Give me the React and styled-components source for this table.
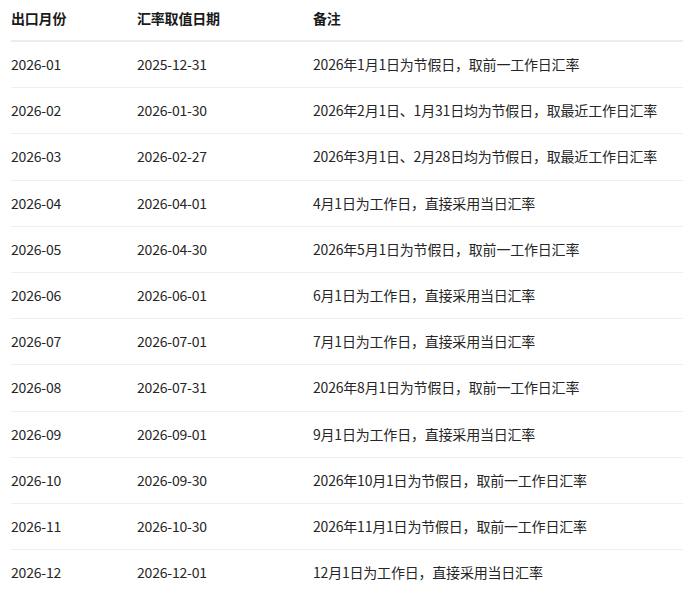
import React from 'react';
import styled, { createGlobalStyle } from 'styled-components';

const GlobalStyle = createGlobalStyle`
  body {
    margin: 0;
    background: #ffffff;
    font-family: "Noto Sans CJK SC", "Noto Sans", sans-serif;
  }
`;

const Wrap = styled.div`
  padding-left: 11px;
  overflow: hidden;
`;

const Table = styled.table`
  width: 700px;
  border-collapse: collapse;
  font-size: 14px;
  letter-spacing: -0.2px;
  color: #262626;
`;

const Th = styled.th`
  text-align: left;
  font-weight: 700;
  color: #1a1a1a;
  padding: 7px 0 11px;
  line-height: 22px;
  border-bottom: 2px solid #ececec;
  width: ${props => props.w || 'auto'};
`;

const Row = styled.tr`
  &:last-child td {
    border-bottom: none;
  }
`;

const Td = styled.td`
  padding: 12px 0;
  line-height: 21.2px;
  border-bottom: 1px solid #efefef;
  white-space: nowrap;
`;

const rows = [
  ['2026-01', '2025-12-31', '2026年1月1日为节假日，取前一工作日汇率'],
  ['2026-02', '2026-01-30', '2026年2月1日、1月31日均为节假日，取最近工作日汇率'],
  ['2026-03', '2026-02-27', '2026年3月1日、2月28日均为节假日，取最近工作日汇率'],
  ['2026-04', '2026-04-01', '4月1日为工作日，直接采用当日汇率'],
  ['2026-05', '2026-04-30', '2026年5月1日为节假日，取前一工作日汇率'],
  ['2026-06', '2026-06-01', '6月1日为工作日，直接采用当日汇率'],
  ['2026-07', '2026-07-01', '7月1日为工作日，直接采用当日汇率'],
  ['2026-08', '2026-07-31', '2026年8月1日为节假日，取前一工作日汇率'],
  ['2026-09', '2026-09-01', '9月1日为工作日，直接采用当日汇率'],
  ['2026-10', '2026-09-30', '2026年10月1日为节假日，取前一工作日汇率'],
  ['2026-11', '2026-10-30', '2026年11月1日为节假日，取前一工作日汇率'],
  ['2026-12', '2026-12-01', '12月1日为工作日，直接采用当日汇率'],
];

export default function App() {
  return (
    <Wrap>
      <GlobalStyle />
      <Table>
        <thead>
          <tr>
            <Th w="126px">出口月份</Th>
            <Th w="176px">汇率取值日期</Th>
            <Th>备注</Th>
          </tr>
        </thead>
        <tbody>
          {rows.map(r => (
            <Row key={r[0]}>
              <Td>{r[0]}</Td>
              <Td>{r[1]}</Td>
              <Td>{r[2]}</Td>
            </Row>
          ))}
        </tbody>
      </Table>
    </Wrap>
  );
}
